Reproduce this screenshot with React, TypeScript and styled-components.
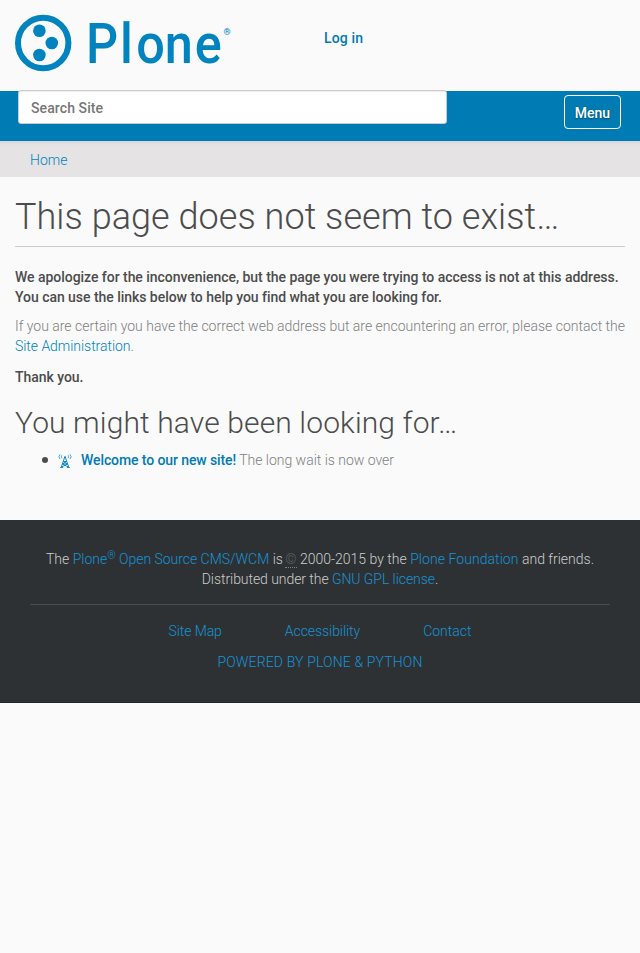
import React from "react";
import styled, { createGlobalStyle } from "styled-components";

const GlobalStyle = createGlobalStyle`
  * { box-sizing: border-box; }
  body {
    margin: 0;
    background: #fafafa;
    color: #4c4c4c;
    font: 300 14px/20px Roboto, "Liberation Sans", sans-serif;
  }
`;

const Link = styled.a<{ $strong?: boolean; $spacing?: number }>`
  color: ${(p) => (p.$strong ? "#007bb3" : "#0083be")};
  font-weight: ${(p) => (p.$strong ? 500 : 300)};
  letter-spacing: ${(p) => p.$spacing ?? 0}px;
  text-decoration: none;
`;

const Header = styled.header`
  display: flex;
  align-items: flex-start;
  height: 91px;
  padding: 15px 15px 0;
`;

const Logo = styled.svg`
  display: block;
  width: 216px;
  height: 57px;
  overflow: visible;
`;

const Login = styled.nav`
  margin: 13px 0 0 93px;
`;

const Bar = styled.div`
  display: flex;
  justify-content: space-between;
  align-items: flex-start;
  height: 50px;
  padding: 0 19px 0 18px;
  background: #007bb3;
`;

const Search = styled.input`
  width: 429px;
  height: 34px;
  margin-top: -1px;
  padding: 7px 12px 5px;
  border: 1px solid #ccc;
  border-radius: 3px;
  background: #fff;
  box-shadow: inset 0 1px 1px rgba(0, 0, 0, 0.075);
  font: 500 14px/20px Roboto, "Liberation Sans", sans-serif;
  letter-spacing: 0.1px;
  &::placeholder {
    color: #767676;
    opacity: 1;
  }
`;

const MenuButton = styled.button`
  width: 57px;
  height: 34px;
  margin-top: 4px;
  padding: 2px 0 0;
  border: 1px solid #fff;
  border-radius: 4px;
  background: transparent;
  color: #fff;
  font: 500 14px/20px Roboto, "Liberation Sans", sans-serif;
  text-shadow: 0 1px 2px rgba(0, 0, 0, 0.4);
`;

const Breadcrumbs = styled.nav`
  height: 36px;
  padding: 9px 30px 0;
  background: linear-gradient(#d7d6d7, #e5e3e4 4px);
`;

const Main = styled.main`
  height: 343px;
  padding: 16px 15px 0;
`;

const Title = styled.h1`
  height: 54px;
  margin: 0 0 20px;
  border-bottom: 1px solid #ccc;
  font-weight: 300;
  font-size: 36px;
  line-height: 49px;
  letter-spacing: 0.05px;
  white-space: nowrap;
`;

const Subtitle = styled.h2`
  margin: 18px 0 10px;
  font-weight: 300;
  font-size: 30px;
  line-height: 35px;
  letter-spacing: 0.12px;
`;

const Text = styled.p<{ $strong?: boolean }>`
  margin: 0 0 ${(p) => (p.$strong ? 9 : 11)}px;
  color: ${(p) => (p.$strong ? "#4c4c4c" : "#808080")};
  font-weight: ${(p) => (p.$strong ? 500 : 300)};
  letter-spacing: ${(p) => (p.$strong ? -0.04 : -0.005)}px;
`;

const Results = styled.ul`
  margin: 0;
  padding: 0 0 0 27px;
  list-style: none;
`;

const Result = styled.li`
  display: flex;
  align-items: center;
  white-space: pre;
  &::before {
    content: "";
    width: 6px;
    height: 6px;
    border-radius: 50%;
    background: #4c4c4c;
  }
`;

const Muted = styled.span`
  color: #808080;
  letter-spacing: -0.02px;
`;

const TypeIcon = styled.svg`
  width: 14px;
  height: 14px;
  margin: 1px 9px 0 10px;
`;

const Footer = styled.footer`
  height: 183px;
  padding: 29px 30px 0;
  background: #2e3133;
  border-bottom: 1px solid #23262a;
  color: #ccc;
  text-align: center;
  a { color: #1693d4; }
`;

const Colophon = styled.p`
  margin: 0;
  padding-bottom: 15px;
  border-bottom: 1px solid #4c4c4c;
  sup {
    position: relative;
    top: -5px;
    font-size: 10.5px;
    line-height: 0;
    vertical-align: baseline;
  }
`;

const License = styled.span`
  letter-spacing: -0.06px;
`;

const Copyright = styled.abbr`
  margin-left: -1px;
  border-bottom: 1px dotted #808080;
  color: #606162;
  text-decoration: none;
`;

const SiteLinks = styled.nav`
  display: flex;
  justify-content: center;
  gap: 63px;
  padding: 16px 0 11px;
`;

function PloneLogo() {
  return (
    <Logo viewBox="0 0 216 57" role="img" aria-label="Plone">
      <g fill="#0083be">
        <circle cx="28.2" cy="28" r="25.2" fill="none" stroke="#0083be" strokeWidth="6" />
        <circle cx="24.4" cy="15.8" r="6.3" />
        <circle cx="36.8" cy="28" r="6.3" />
        <circle cx="24.4" cy="40" r="6.3" />
        <text transform="scale(.9 1)" x="78.9 116.7 134.8 166.3 199.6" y="47.8" fontFamily="Roboto" fontWeight="500" fontSize="56">Plone</text>
        <text x="208.6" y="19.8" fontFamily="Roboto" fontWeight="500" fontSize="9">®</text>
      </g>
    </Logo>
  );
}

function TowerIcon() {
  return (
    <TypeIcon viewBox="0 0 14 14" fill="none" stroke="#0083be">
      <path d="M6.7 3.2 3.2 13.3M7.3 3.2 10.8 13.3M2.2 13.5h3M8.8 13.5h3M5.4 7.5h3.2M4.6 10h4.8M5.6 7.5 9.4 10 3.6 13M8.4 7.5 4.6 10l5.8 3" strokeWidth=".9" />
      <circle cx="7" cy="3.2" r="1" fill="#0083be" stroke="none" />
      <path d="M3.9 1.2q-1.1 1.5 0 3M10.1 1.2q1.1 1.5 0 3M2 .3Q-.2 2.7 2 5.1M12 .3q2.2 2.4 0 4.8" strokeWidth=".7" />
    </TypeIcon>
  );
}

export default function App() {
  return (
    <>
      <GlobalStyle />
      <Header>
        <PloneLogo />
        <Login><Link $strong $spacing={0.15}>Log in</Link></Login>
      </Header>
      <Bar>
        <Search placeholder="Search Site" />
        <MenuButton>Menu</MenuButton>
      </Bar>
      <Breadcrumbs><Link>Home</Link></Breadcrumbs>
      <Main>
        <Title>This page does not seem to exist…</Title>
        <Text $strong>
          We apologize for the inconvenience, but the page you were trying to access is not at this address. You can use the links below to help you find what you are looking for.
        </Text>
        <Text>
          If you are certain you have the correct web address but are encountering an error, please contact the <Link $spacing={-0.04}>Site Administration</Link>.
        </Text>
        <Text $strong>Thank you.</Text>
        <Subtitle>You might have been looking for…</Subtitle>
        <Results>
          <Result>
            <TowerIcon />
            <Link $strong $spacing={-0.1}>Welcome to our new site!</Link>
            <Muted> The long wait is now over</Muted>
          </Result>
        </Results>
      </Main>
      <Footer>
        <Colophon>
          The <Link $spacing={-0.02}>Plone<sup>®</sup> Open Source CMS/WCM</Link> is <Copyright>©</Copyright> 2000-2015 by the <Link $spacing={0.06}>Plone Foundation</Link> and friends.
          <br />
          <License>Distributed under the <Link $spacing={-0.06}>GNU GPL license</Link>.</License>
        </Colophon>
        <SiteLinks>
          <Link $spacing={-0.08}>Site Map</Link>
          <Link $spacing={-0.06}>Accessibility</Link>
          <Link>Contact</Link>
        </SiteLinks>
        <Link $spacing={0.15}>POWERED BY PLONE &amp; PYTHON</Link>
      </Footer>
    </>
  );
}
